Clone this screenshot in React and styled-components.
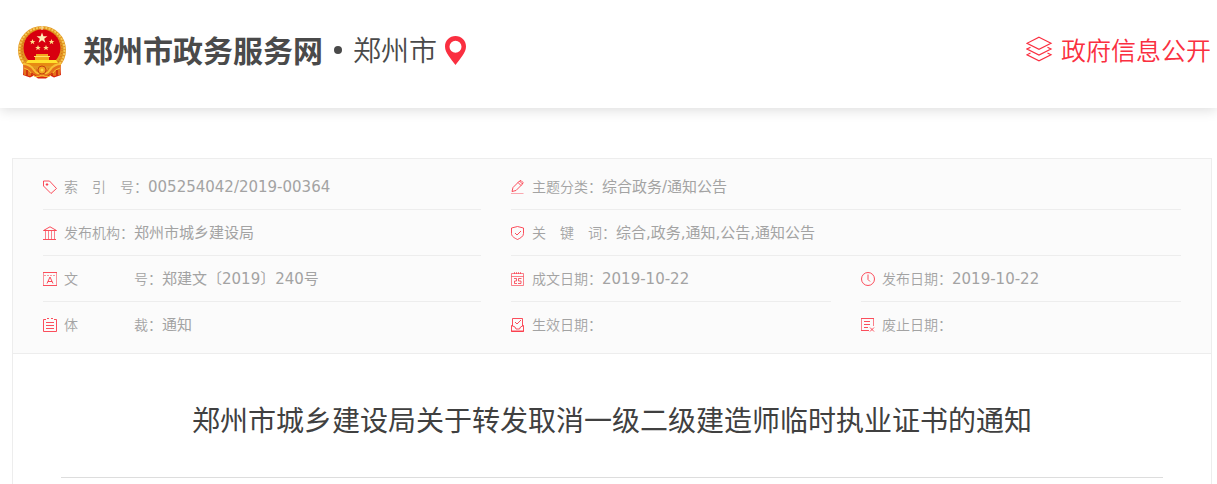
import React from 'react'
import styled, { createGlobalStyle } from 'styled-components'

const RED = '#fa2f40'

const GlobalStyle = createGlobalStyle`
	* {
		box-sizing: border-box;
	}
	body {
		margin: 0;
		background: #fff;
		color: #404040;
		font-family: 'DejaVu Sans', 'Noto Sans CJK SC', sans-serif;
	}
	h1, dl, dt, dd {
		margin: 0;
		font-weight: normal;
	}
	a {
		color: inherit;
		text-decoration: none;
	}
	svg {
		display: block;
		flex: none;
	}
`

const Page = styled.div`
	display: flex;
	flex-direction: column;
	min-height: 100vh;
`

const Header = styled.header`
	display: flex;
	justify-content: space-between;
	align-items: center;
	height: 108px;
	padding: 0 6px 4px 17px;
	background: #fff;
	box-shadow: 0 2px 12px rgba(0, 0, 0, 0.14);
`

const Brand = styled.div`
	display: flex;
	align-items: center;
	font-family: 'Noto Sans CJK SC', sans-serif;
	color: #4a4a4a;
`

const SiteLink = styled.a`
	display: flex;
	align-items: center;
	gap: 16px;
	font-size: 30px;
	line-height: 44px;
	font-weight: bold;
`

const Text = styled.span`
	padding-bottom: 6px;
`

const Dot = styled.span`
	width: 8px;
	height: 8px;
	margin: 0 11px 4px;
	border-radius: 50%;
	background: #4a4a4a;
`

const CityLink = styled.a`
	display: flex;
	align-items: center;
	gap: 8px;
	font-size: 28px;
	line-height: 44px;
	font-weight: 350;

	svg {
		margin-bottom: 4px;
	}
`

const OpenLink = styled.a`
	display: flex;
	align-items: center;
	gap: 8px;
	font-family: 'Noto Sans CJK SC', sans-serif;
	font-size: 25px;
	line-height: 44px;
	font-weight: 350;
	color: ${RED};

	svg {
		margin-bottom: 6px;
	}
`

const Main = styled.main`
	display: flex;
	flex: 1;
	padding: 50px 5px 0 12px;
`

const Article = styled.article`
	flex: 1;
	border: 1px solid #ededed;
	border-bottom: 0;
`

const Info = styled.section`
	display: grid;
	grid-template-columns: 438fr 670fr;
	gap: 30px;
	padding: 5px 30px;
	background: #fbfbfb;
	border-bottom: 1px solid #ededed;
`

const List = styled.dl`
	display: grid;
	grid-template-columns: repeat(${({ $cols }) => $cols || 1}, 1fr);
	column-gap: 30px;
`

const Row = styled.div`
	display: flex;
	align-items: center;
	height: 46px;
	grid-column: ${({ $wide }) => ($wide ? '1 / -1' : 'auto')};
	border-bottom: 1px solid ${({ $last }) => ($last ? 'transparent' : '#ededed')};
	color: #a3a3a3;
	line-height: 24px;
	white-space: nowrap;
`

const Label = styled.dt`
	margin-left: 7px;
	padding-bottom: 2px;
	font-family: 'Noto Sans CJK SC', sans-serif;
	font-size: 14px;
	font-weight: 350;
	white-space: pre;
`

const Value = styled.dd`
	font-size: 15px;
`

const TitleBox = styled.div`
	margin: 0 48px;
	padding: 43px 0 35px;
	border-bottom: 1px solid #ddd;
`

const Title = styled.h1`
	font-family: 'Noto Sans CJK SC', sans-serif;
	font-size: 28px;
	line-height: 45px;
	text-align: center;
`

const Emblem = () => (
	<svg width='50' height='54' viewBox='0 0 50 54' aria-hidden='true'>
		<path d='M7 37L6 50l7 2.500 4-2 4 3h8l4-3 4 2 7-2.500-1-13z' fill='#d9260f' />
		<circle cx='25' cy='25' r='24' fill='#e2951f' />
		<circle cx='25' cy='25' r='22.500' fill='none' stroke='#f5c95a' strokeWidth='2' strokeDasharray='2 1.200' />
		<circle cx='25' cy='25' r='20' fill='none' stroke='#cc5a1a' strokeWidth='1' strokeDasharray='1 2' />
		<circle cx='25' cy='23' r='18.500' fill='#d8000f' />
		<path d='M24.500 1h1v4h-1z' fill='#fff3dd' />
		<path d='M25 7.500l1.400 3.700h4l-3.200 2.500 1.200 4-3.400-2.400-3.400 2.400 1.200-4-3.200-2.500h4z' fill='#fff0b8' />
		<g fill='#ffe08a'>
			<path id='star' d='M15.500 14l.8 1.900h2l-1.600 1.300.6 2.100-1.800-1.200-1.800 1.200.6-2.100-1.600-1.300h2z' />
			<use href='#star' x='19' />
			<use href='#star' x='5.500' y='6' />
			<use href='#star' x='13.500' y='6' />
		</g>
		<path d='M19 29h12v2H19zM18 32h14v3H18z' fill='#f3a91d' />
		<path d='M17 31h16v1H17z' fill='#ffe065' />
		<path d='M11 35h28l2 3H9z' fill='#ffe12e' />
		<path d='M9 38h32l-3 3H12z' fill='#e78b12' />
		<path d='M6 39q7 0 11 6h16q4-6 11-6l-1 11-6 1-4-2-4 3h-8l-4-3-4 2-6-1z' fill='#e4701a' />
		<g fill='none' stroke='#f9bf35'>
			<path d='M6 39q7 0 11 6t8 1q4 5 8-1t11-6' strokeWidth='2' />
			<path d='M7 43q5 1 8 6t10 1q7 4 10-1t8-6' strokeWidth='1' />
		</g>
		<path d='M10 45v6M15 48v3M35 48v3M40 45v6' fill='none' stroke='#c9200c' strokeWidth='1.500' />
		<circle cx='25' cy='45' r='4' fill='#f2a322' stroke='#c4430f' />
		<circle cx='25' cy='45' r='1.500' fill='#ffd843' />
	</svg>
)

const Pin = () => (
	<svg width='21' height='29' viewBox='0 0 21 29' aria-hidden='true'>
		<path
			fill={RED}
			fillRule='evenodd'
			d='M10.500 0C4.700 0 0 4.600 0 10.400 0 17 6 22.500 10.500 29 15 22.500 21 17 21 10.400 21 4.600 16.300 0 10.500 0zm0 4.700a6 6 0 1 1 0 12 6 6 0 0 1 0-12z'
		/>
	</svg>
)

const Layers = () => (
	<svg width='27' height='26' viewBox='0 0 27 26' fill='none' stroke={RED} strokeWidth='1.200' aria-hidden='true'>
		<path d='M13 1.200L25 7.300 13 13.400 1 7.300z' />
		<path d='M4.500 11.200L1 13l12 6 12-6-3.500-1.800' />
		<path d='M4.500 17L1 18.800l12 6 12-6L21.500 17' />
	</svg>
)

const icons = {
	tag: (
		<>
			<path d='M.5 1v5l7.500 7.500 5.500-5L6.500 1z' />
			<circle cx='4' cy='4.500' r='.8' fill={RED} />
		</>
	),
	bank: (
		<>
			<path d='M.5 4.500L7 .8l6.500 3.700zM0 13.500h13' />
			<path d='M2.500 5v8M5.500 5v8M8.500 5v8M11.500 5v8' strokeOpacity='.6' />
		</>
	),
	text: (
		<>
			<path d='M0 .5h14M0 13.500h14' />
			<path d='M.5 1v12M13.500 1v12' strokeOpacity='.5' />
			<path d='M1 3.500h12' strokeDasharray='2 1' strokeOpacity='.5' />
			<path d='M4 11.500L7 5l3 6.500M5 9.500h4' />
		</>
	),
	list: (
		<>
			<path d='M3 1.500H.5v12h13v-12H11' />
			<path d='M4 .5h2M8 .5h2M3 4.500h8M3 7.500h8M3 10.500h8' />
		</>
	),
	pencil: (
		<>
			<path d='M1 11.500l1-4L8.500 1l3 3L5 10.500zM7 2.500l3 3M8.500 1L10 .5 12 2.500l-.5 1.500' />
			<path d='M0 13.500h12.500' strokeOpacity='.4' />
		</>
	),
	shield: <path d='M6.500 .5L.5 2v5.500c0 3 3 4.500 6 6 3-1.500 6-3 6-6V2zM4 7l2 2 4-4' />,
	calendar: (
		<>
			<path d='M.5 1.500h12v12H.5zM.5 4.500h12' strokeOpacity='.6' />
			<path d='M3.500 0v2M5.500 0v2M7.500 0v2M9.500 0v2' strokeOpacity='.6' />
			<path d='M3 6.500h2.500V9H3.500v2.500H6M10.500 6.500h-3V9H10v2.500H7' strokeWidth='.9' />
		</>
	),
	inbox: (
		<>
			<path d='M1.500 8V.5h10V8M4 4l2 2 4-4' />
			<path d='M.5 7.500L4 9l1 2h3.500L9.500 9l3-1.500v6H.5z' />
			<path d='M0 13h13' />
		</>
	),
	clock: <path d='M7 .5a6.500 6.500 0 1 0 0 13 6.500 6.500 0 0 0 0-13zM7 2.500v5l2 2' />,
	expire: (
		<>
			<path d='M0 .5h13M8 12.500H0M9 9.500l4 4M13 9.500l-4 4' />
			<path d='M.5 1v11M12.500 1v7' strokeOpacity='.6' />
			<path d='M3 3.500h6M3 6.500h6M3 9.500h4' />
		</>
	),
}

const Icon = ({ name }) => (
	<svg width='14' height='14' viewBox='0 0 14 14' fill='none' stroke={RED} strokeWidth='1' strokeOpacity='.85' aria-hidden='true'>
		{icons[name]}
	</svg>
)

const leftRows = [
	{ icon: 'tag', label: '索　引　号：', value: '005254042/2019-00364' },
	{ icon: 'bank', label: '发布机构：', value: '郑州市城乡建设局' },
	{ icon: 'text', label: '文　　　　号：', value: '郑建文〔2019〕240号' },
	{ icon: 'list', label: '体　　　　裁：', value: '通知', last: true },
]

const rightRows = [
	{ icon: 'pencil', label: '主题分类：', value: '综合政务/通知公告', wide: true },
	{ icon: 'shield', label: '关　键　词：', value: '综合,政务,通知,公告,通知公告', wide: true },
	{ icon: 'calendar', label: '成文日期：', value: '2019-10-22' },
	{ icon: 'clock', label: '发布日期：', value: '2019-10-22' },
	{ icon: 'inbox', label: '生效日期：', value: '', last: true },
	{ icon: 'expire', label: '废止日期：', value: '', last: true },
]

const InfoList = ({ rows, cols }) => (
	<List $cols={cols}>
		{rows.map((row) => (
			<Row key={row.label} $wide={row.wide} $last={row.last}>
				<Icon name={row.icon} />
				<Label>{row.label}</Label>
				<Value>{row.value}</Value>
			</Row>
		))}
	</List>
)

const App = () => {
	return (
		<Page>
			<GlobalStyle />
			<Header>
				<Brand>
					<SiteLink href='#'>
						<Emblem />
						<Text>郑州市政务服务网</Text>
					</SiteLink>
					<Dot />
					<CityLink href='#'>
						<Text>郑州市</Text>
						<Pin />
					</CityLink>
				</Brand>
				<OpenLink href='#'>
					<Layers />
					<Text>政府信息公开</Text>
				</OpenLink>
			</Header>
			<Main>
				<Article>
					<Info>
						<InfoList rows={leftRows} />
						<InfoList rows={rightRows} cols={2} />
					</Info>
					<TitleBox>
						<Title>郑州市城乡建设局关于转发取消一级二级建造师临时执业证书的通知</Title>
					</TitleBox>
				</Article>
			</Main>
		</Page>
	)
}

export default App
